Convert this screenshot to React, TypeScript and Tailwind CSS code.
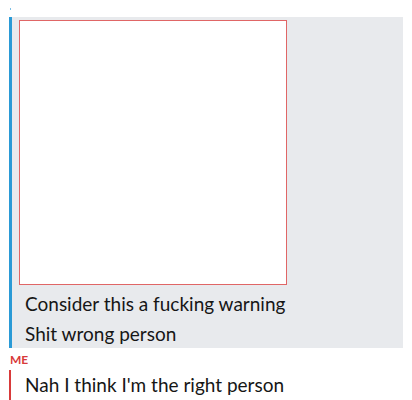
export default function App() {
	return (
		<div className="w-[412px] h-[400px] bg-white relative font-['Lato',sans-serif] text-[#161616]">
			<div className="h-[17px] pl-[10px] pt-[8px]">
				<div className="w-px h-[2px] bg-[#7bbfe6]" />
			</div>

			{/* Quoted message */}
			<div className="ml-[9px] w-[394px] h-[331px] bg-[#e8eaed] border-l-[3px] border-[#2a9ad6] pt-[3px] pl-[7px]">
				<div className="w-[268px] h-[265px] bg-white border border-[#e06666]" />
				<div className="pl-[6px] pt-[4px] text-[19px] leading-[30px]">
					<p>Consider this a fucking warning</p>
					<p>Shit wrong person</p>
				</div>
			</div>

			{/* Reply */}
			<div className="pl-[10px] pt-[6px] text-[12px] leading-[12px] font-bold text-[#d83a3a]">ME</div>
			<div className="ml-[9px] mt-[4px] border-l-2 border-[#d83a3a] pl-[14px] h-[30px] flex items-center text-[19px]">
				Nah I think I'm the right person
			</div>
		</div>
	);
}
